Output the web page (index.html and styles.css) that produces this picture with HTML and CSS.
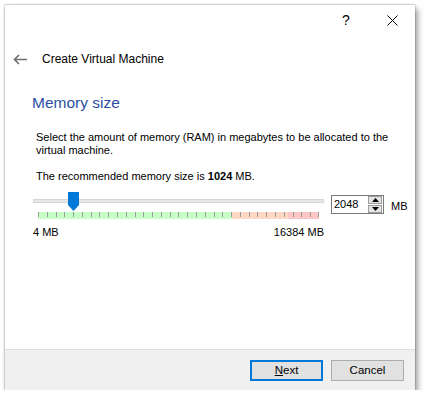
FILE: index.html
```html
<!DOCTYPE html>
<html>
<head>
<meta charset="utf-8">
<link rel="stylesheet" href="styles.css">
</head>
<body>
<div class="window">
  <div class="titlebar">
    <div class="cap-btn help">?</div>
    <div class="cap-btn close">
      <svg width="11" height="11" viewBox="0 0 11 11"><path d="M0.5 0.5L10.5 10.5M10.5 0.5L0.5 10.5" stroke="#000" stroke-width="1" fill="none"/></svg>
    </div>
  </div>
  <div class="header">
    <svg class="back" width="14" height="11" viewBox="0 0 14 11"><path d="M1.5 5.5H14M6 1L1.5 5.5L6 10" stroke="#6e6e6e" stroke-width="1.6" fill="none"/></svg>
    <span class="header-title">Create Virtual Machine</span>
  </div>
  <div class="content">
    <h1 class="page-title">Memory size</h1>
    <p class="text first">Select the amount of memory (RAM) in megabytes to be allocated to the virtual machine.</p>
    <p class="text second">The recommended memory size is <b>1024</b> MB.</p>
    <div class="slider-row">
      <div class="slider">
        <div class="track"></div>
        <svg class="thumb" width="11" height="19" viewBox="0 0 11 19"><path d="M0 0H11V13L5.5 19L0 13Z" fill="#0078d7"/></svg>
        <div class="band">
          <div class="seg green"></div>
          <div class="seg orange"></div>
          <div class="seg red"></div>
          <svg class="ticks" width="281" height="7" viewBox="0 0 281 7"><path fill="#9a9a9a" d="M0 0h1v5h-1zM9 0h1v5h-1zM18 0h1v5h-1zM26 0h1v5h-1zM35 0h1v5h-1zM44 0h1v5h-1zM53 0h1v5h-1zM61 0h1v5h-1zM70 0h1v5h-1zM79 0h1v5h-1zM88 0h1v5h-1zM97 0h1v5h-1zM105 0h1v5h-1zM114 0h1v5h-1zM123 0h1v5h-1zM132 0h1v5h-1zM140 0h1v5h-1zM149 0h1v5h-1zM158 0h1v5h-1zM167 0h1v5h-1zM176 0h1v5h-1zM184 0h1v5h-1zM193 0h1v5h-1zM202 0h1v5h-1zM211 0h1v5h-1zM219 0h1v5h-1zM228 0h1v5h-1zM237 0h1v5h-1zM246 0h1v5h-1zM255 0h1v5h-1zM263 0h1v5h-1zM272 0h1v5h-1zM280 0h1v5h-1z"/></svg>
        </div>
        <div class="labels"><span>4 MB</span><span>16384 MB</span></div>
      </div>
      <div class="spin">
        <span class="spin-value">2048</span>
        <div class="spin-btns">
          <div class="spin-btn"><svg width="7" height="4" viewBox="0 0 7 4"><path d="M3.5 0L7 4H0Z" fill="#000"/></svg></div>
          <div class="spin-btn"><svg width="7" height="4" viewBox="0 0 7 4"><path d="M0 0H7L3.5 4Z" fill="#000"/></svg></div>
        </div>
      </div>
      <span class="unit">MB</span>
    </div>
  </div>
  <div class="footer">
    <button class="btn default"><u>N</u>ext</button>
    <button class="btn">Cancel</button>
  </div>
</div>
</body>
</html>
```
FILE: styles.css
```css
html, body {
  margin: 0;
  padding: 0;
  background: #ffffff;
}
body {
  font-family: "Liberation Sans", Arial, sans-serif;
  font-size: 11px;
  color: #000;
}
.window {
  margin: 5px 0 0 5px;
  width: 410px;
  height: 385px;
  background: #fff;
  display: flex;
  flex-direction: column;
  box-shadow: 0 0 0 1px rgba(0,0,0,0.08), 0 0 3px rgba(0,0,0,0.2), 3px 4px 6px rgba(0,0,0,0.35);
}
.titlebar {
  height: 30px;
  display: flex;
  justify-content: flex-end;
}
.cap-btn {
  width: 46px;
  height: 30px;
  display: flex;
  align-items: center;
  justify-content: center;
}
.help {
  font-size: 14px;
}
.header {
  height: 48px;
  display: flex;
  align-items: center;
}
.back {
  margin-left: 8px;
}
.header-title {
  margin-left: 15px;
  font-size: 12px;
  line-height: 14px;
}
.content {
  flex: 1;
  padding: 10px 0 0 27px;
}
.page-title {
  margin: 0;
  font-size: 15.5px;
  line-height: 20px;
  font-weight: normal;
  color: #2b4fa3;
}
.text {
  margin: 0 0 0 4px;
  line-height: 13px;
}
.text.first {
  margin-top: 18px;
  width: 360px;
}
.text.second {
  margin-top: 13px;
}
.slider-row {
  margin-top: 9px;
  margin-left: 1px;
  display: flex;
  align-items: flex-start;
}
.slider {
  position: relative;
  width: 291px;
}
.track {
  margin-top: 7px;
  height: 4px;
  box-sizing: border-box;
  background: #e7e7e7;
  border: 1px solid #d6d6d6;
}
.thumb {
  position: absolute;
  left: 35px;
  top: 0;
}
.band {
  position: relative;
  margin: 9px 5px 0 5px;
  height: 7px;
  display: flex;
}
.seg.green { width: 194px; background: #c6ffc6; }
.seg.orange { width: 56px; background: #ffd8c4; }
.seg.red { flex: 1; background: #ffc6c6; }
.ticks {
  position: absolute;
  left: 0;
  top: 0;
}
.labels {
  margin-top: 7px;
  display: flex;
  justify-content: space-between;
  line-height: 13px;
}
.spin {
  margin-top: 3px;
  margin-left: 7px;
  width: 53px;
  height: 19px;
  box-sizing: border-box;
  border: 1px solid #7a7a7a;
  display: flex;
  align-items: center;
  justify-content: space-between;
}
.spin-value {
  padding-left: 2px;
  line-height: 13px;
}
.spin-btns {
  display: flex;
  flex-direction: column;
  margin-right: 1px;
}
.spin-btn {
  width: 14px;
  height: 8px;
  box-sizing: border-box;
  border: 1px solid #9c9c9c;
  background: #e5e5e5;
  display: flex;
  align-items: center;
  justify-content: center;
}
.spin-btn + .spin-btn {
  margin-top: 1px;
}
.unit {
  margin-top: 8px;
  margin-left: 7px;
  line-height: 13px;
}
.footer {
  height: 41px;
  box-sizing: border-box;
  border-top: 1px solid #dfdfdf;
  background: #f0f0f0;
  display: flex;
  justify-content: flex-end;
  align-items: center;
  gap: 8px;
  padding-right: 11px;
}
.btn {
  width: 73px;
  height: 21px;
  box-sizing: border-box;
  border: 1px solid #adadad;
  background: #e1e1e1;
  font-family: "Liberation Sans", Arial, sans-serif;
  font-size: 11.5px;
  color: #000;
  padding: 0;
}
.btn.default {
  border: 2px solid #0078d7;
}
```
